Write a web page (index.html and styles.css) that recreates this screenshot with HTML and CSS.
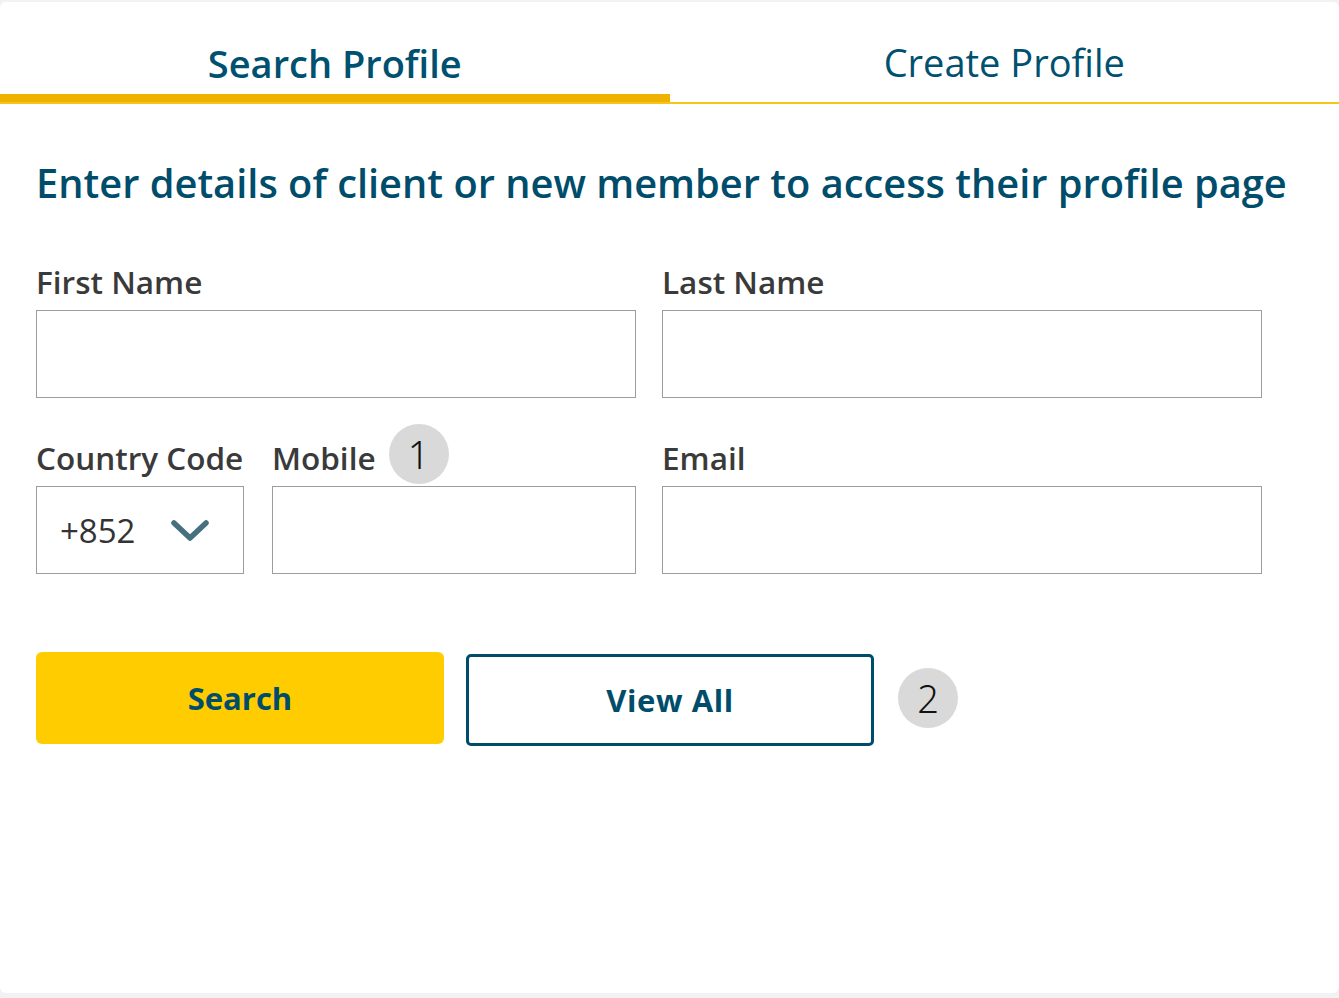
FILE: index.html
```html
<!DOCTYPE html>
<html lang="en">
<head>
<meta charset="utf-8">
<title>Search Profile</title>
<link rel="stylesheet" href="styles.css">
</head>
<body>
<div class="card">
  <div class="tabs">
    <div class="tab active">Search Profile</div>
    <div class="tab">Create Profile</div>
  </div>
  <div class="content">
    <h1 class="title">Enter details of client or new member to access their profile page</h1>
    <div class="grid">
      <div class="field">
        <label class="label">First Name</label>
        <div class="input"></div>
      </div>
      <div class="field">
        <label class="label">Last Name</label>
        <div class="input"></div>
      </div>
      <div class="phone">
        <div class="field cc">
          <label class="label">Country Code</label>
          <div class="input select">
            <span class="cc-value">+852</span>
            <svg class="chev" width="38" height="22" viewBox="0 0 38 22"><path d="M3 3 L19 18 L35 3" fill="none" stroke="#46707f" stroke-width="5.5" stroke-linecap="round" stroke-linejoin="round"/></svg>
          </div>
        </div>
        <div class="field mobile">
          <label class="label">Mobile <span class="badge b1">1</span></label>
          <div class="input"></div>
        </div>
      </div>
      <div class="field email">
        <label class="label">Email</label>
        <div class="input"></div>
      </div>
    </div>
    <div class="actions">
      <button class="btn primary">Search</button>
      <button class="btn outline">View All</button>
      <span class="badge b2">2</span>
    </div>
  </div>
</div>
</body>
</html>
```
FILE: styles.css
```css
* { box-sizing: border-box; }
html, body { margin: 0; padding: 0; }
body {
  background: #f2f2f2;
  font-family: "Open Sans", "Noto Sans", sans-serif;
  width: 1339px;
  height: 998px;
  padding-top: 2px;
  padding-bottom: 5px;
}
.card {
  background: #fff;
  height: 991px;
  border-radius: 6px;
}
.tabs {
  display: flex;
  border-bottom: 2px solid #f5c518;
  height: 102px;
}
.tab {
  flex: 1 1 50%;
  display: flex;
  align-items: flex-end;
  justify-content: center;
  color: #005070;
  font-size: 38px;
  font-weight: 400;
  line-height: 48px;
  padding-bottom: 16px;
}
.tab.active {
  font-size: 38px;
  font-weight: 600;
  border-bottom: 8px solid #efb200;
  padding-bottom: 7px;
}
.content {
  padding: 0 36px;
}
.title {
  margin: 55px 0 0;
  color: #004d6b;
  font-size: 39.8px;
  font-weight: 600;
  line-height: 48px;
  white-space: nowrap;
}
.grid {
  display: grid;
  grid-template-columns: 600px 600px;
  column-gap: 26px;
  row-gap: 42px;
  margin-top: 57px;
}
.field { display: flex; flex-direction: column; }
.label {
  color: #3a3a3a;
  font-size: 31.5px;
  font-weight: 600;
  line-height: 36px;
  height: 36px;
  margin-bottom: 10px;
  display: flex;
  align-items: center;
  white-space: nowrap;
}
.input {
  height: 88px;
  border: 1px solid #9c9c9c;
  background: #fff;
}
.phone {
  display: flex;
  gap: 28px;
}
.cc { width: 208px; }
.mobile { flex: 1; }
.select {
  display: flex;
  align-items: center;
  justify-content: space-between;
  padding: 0 34px 0 23px;
}
.cc-value {
  color: #333;
  font-size: 33px;
  font-weight: 400;
}
.chev { margin-top: 2px; }
.badge {
  display: inline-flex;
  align-items: center;
  justify-content: center;
  width: 60px;
  height: 60px;
  border-radius: 50%;
  background: #d9d9d9;
  color: #111;
  font-family: "Noto Sans", sans-serif;
  font-weight: 300;
  font-size: 38px;
}
.b1 { margin-left: 13px; margin-top: -8px; }
.actions {
  display: flex;
  align-items: center;
  gap: 22px;
  margin-top: 76px;
}
.btn {
  width: 408px;
  height: 92px;
  font-family: "Open Sans", "Noto Sans", sans-serif;
  font-size: 31px;
  font-weight: 700;
  color: #004d6b;
  cursor: pointer;
}
.primary {
  background: #ffcc00;
  border: none;
  border-radius: 6px;
}
.outline {
  background: #fff;
  border: 3px solid #004d6b;
  border-radius: 5px;
  margin-top: 4px;
  letter-spacing: 0.6px;
}
.b2 { margin-left: 2px; }
```
